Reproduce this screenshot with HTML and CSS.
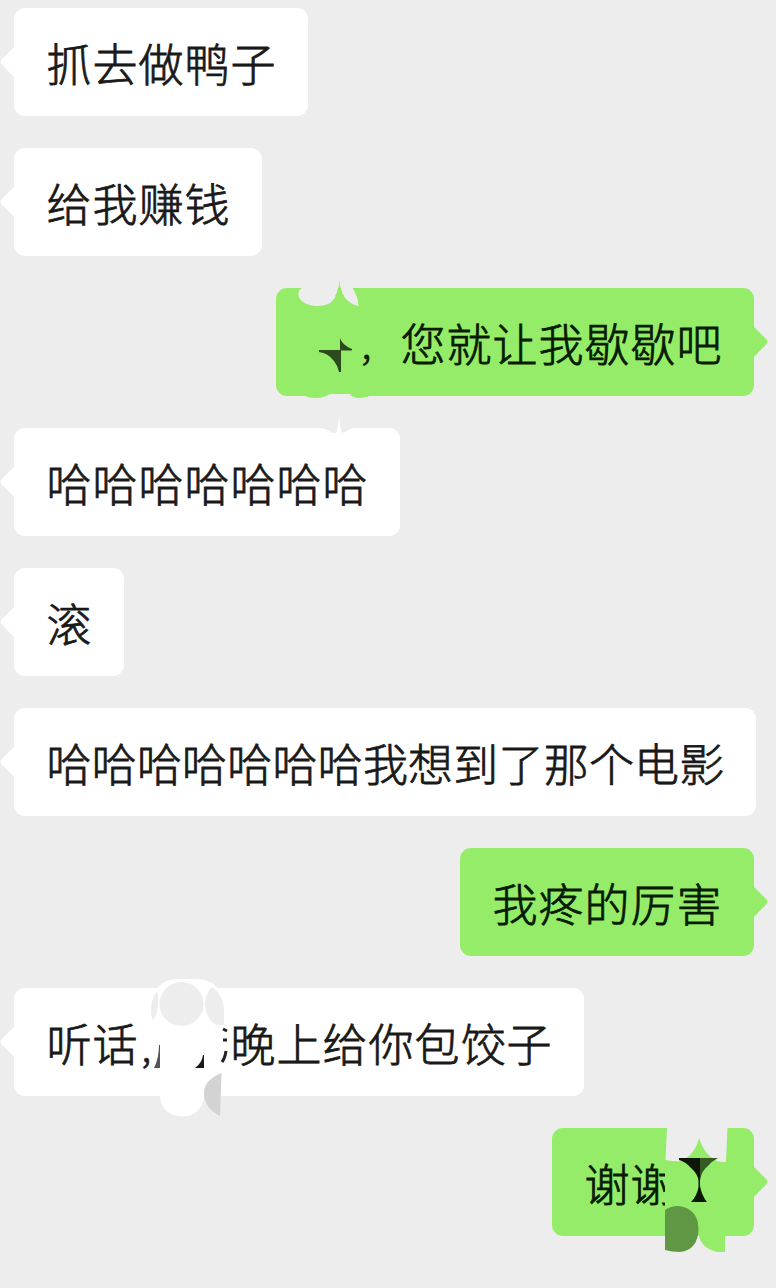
FILE: index.html
```html
<!DOCTYPE html>
<html lang="zh-CN">
<head>
<meta charset="utf-8">
<title>聊天</title>
<link rel="stylesheet" href="styles.css">
</head>
<body>
<main class="chat">
  <div class="row"><svg class="tail" viewBox="0 0 14 32"><path d="M14 1L1.5 13.5Q-.5 16 1.5 18L14 31Z"/></svg><p class="bubble">抓去做鸭子</p></div>
  <div class="row"><svg class="tail" viewBox="0 0 14 32"><path d="M14 1L1.5 13.5Q-.5 16 1.5 18L14 31Z"/></svg><p class="bubble">给我赚钱</p></div>
  <div class="row mine"><p class="bubble covered-start"><span class="comma">，</span>您就让我歇歇吧</p><svg class="tail" viewBox="0 0 14 32"><path d="M0 1L12.5 13.5Q14.5 16 12.5 18L0 31Z"/></svg></div>
  <div class="row"><svg class="tail" viewBox="0 0 14 32"><path d="M14 1L1.5 13.5Q-.5 16 1.5 18L14 31Z"/></svg><p class="bubble">哈哈哈哈哈哈哈</p></div>
  <div class="row"><svg class="tail" viewBox="0 0 14 32"><path d="M14 1L1.5 13.5Q-.5 16 1.5 18L14 31Z"/></svg><p class="bubble">滚</p></div>
  <div class="row"><svg class="tail" viewBox="0 0 14 32"><path d="M14 1L1.5 13.5Q-.5 16 1.5 18L14 31Z"/></svg><p class="bubble tight">哈哈哈哈哈哈哈我想到了那个电影</p></div>
  <div class="row mine"><p class="bubble">我疼的厉害</p><svg class="tail" viewBox="0 0 14 32"><path d="M0 1L12.5 13.5Q14.5 16 12.5 18L0 31Z"/></svg></div>
  <div class="row"><svg class="tail" viewBox="0 0 14 32"><path d="M14 1L1.5 13.5Q-.5 16 1.5 18L14 31Z"/></svg><p class="bubble"><span class="lead">听话<span class="comma-narrow">,</span></span>晚上给你包饺子</p></div>
  <div class="row mine"><p class="bubble covered-end">谢谢</p><svg class="tail" viewBox="0 0 14 32"><path d="M0 1L12.5 13.5Q14.5 16 12.5 18L0 31Z"/></svg></div>
  <svg class="smudges" viewBox="0 0 776 1288">
    <g>
      <path class="bg" d="M303 287C298 290 297 295 300 299C306 307 322 308 330 303C335 299 338 294 338 287Z"/>
      <path class="bg" d="M341 287C341 295 348 304 358.500 306C358 298 355 292 352 287Z"/>
      <path class="green" d="M335 296Q339 290 339.300 280Q340 290 344 296L339 300Z"/>
      <path class="dark" d="M319 350H340V338Q342 345 352 349V350.500H341V372H339Q338 366 334 361Q328 353 319 352Z"/>
      <path class="bg" d="M325 397Q327 394 332 394H348Q352 394 354 397Z"/>
      <path class="green" d="M304 395H328Q324 398 315 398Q308 398 304 395ZM350 395H372Q366 398 360 398Q354 398 350 395Z"/>
      <path class="bg" d="M319 427.500H356Q350 428 347 431Q344 433 340 433H335Q330 433 327 430Q324 428 319 427.500Z"/>
      <path class="white" d="M335 434Q338 431 338.500 419H339.500Q340 431 343 434Z"/>
    </g>
    <g>
      <path class="white" d="M151 1010C151 992 160 979 178 979H196C214 979 224 991 224 1010V1026H151Z"/>
      <circle class="bg" cx="181.500" cy="1004" r="22"/>
      <path class="bg" d="M157 992Q151 998 151 1010Q151 1017 153 1020Q158 1014 158 1003Q159 996 157 992ZM212 987Q224 996 224 1010V1025H216Q206 1019 205 1004Q205 994 212 987Z"/>
      <path class="white" d="M160 1090H204V1097C203 1109 194 1116.500 182 1116.500C169 1116.500 161 1108 160 1097Z"/>
      <path class="fade" d="M160 1045V1068H154Q159 1058 159 1045Z"/>
      <path class="ink" d="M204 1055V1068H195Q202 1063 203 1055Z"/>
      <path class="silver" d="M221.500 1073L220 1116Q204 1108 204 1093Q204 1080 221.500 1073Z"/>
      <path class="mark" d="M223 1029L227 1031M223 1040H227M226 1051Q225 1058 222 1062"/>
    </g>
    <g>
      <path class="green" d="M665 1160H726V1208H665Z"/>
      <path class="bg" d="M667 1127H727.500L726 1162Q719 1162 715 1160Q704 1154 699 1138Q695 1155 681 1161Q675 1162 665.500 1160Z"/>
      <path class="night" d="M679 1158H700V1186Q702 1196 707 1202H691Q697 1196 698.500 1187V1181Q698 1174 691 1168Q686 1162 679 1160Z"/>
      <path class="dusk" d="M700 1158H718Q712 1161 708 1166Q702 1170 700 1180Z"/>
      <path class="moss" d="M665 1210Q671 1206 678 1206Q698 1208 698.500 1229Q698 1250 680 1252Q672 1252 665 1250Z"/>
      <path class="green" d="M699 1235H725V1252H717Q701 1248 699 1235Z"/>
    </g>
  </svg>
</main>
</body>
</html>
```
FILE: styles.css
```css
body {
  margin: 0;
  background: #ededed;
}

.chat {
  position: relative;
  box-sizing: border-box;
  width: 776px;
  height: 1288px;
  padding: 8px 8px 0 0;
  display: flex;
  flex-direction: column;
  gap: 32px;
  overflow: hidden;
}

.row {
  display: flex;
  align-items: center;
  height: 108px;
  color: #fff;
}

.mine {
  justify-content: flex-end;
  color: #95ec69;
}

.tail {
  flex: none;
  width: 14px;
  height: 32px;
  fill: currentColor;
}

.bubble {
  box-sizing: border-box;
  height: 108px;
  margin: 0;
  padding: 0 31.5px 0 32.5px;
  border-radius: 11px;
  background: #fff;
  color: #191919;
  font: 300 45px/109px "Noto Sans CJK SC", sans-serif;
  letter-spacing: 1px;
  -webkit-text-stroke: 0.8px currentColor;
  white-space: nowrap;
}

.mine .bubble {
  background: #95ec69;
  color: #061b00;
}

.bubble.tight {
  letter-spacing: 0.2px;
}

.mine .covered-start {
  padding-left: 78.5px;
}

.mine .covered-end {
  padding-right: 77.5px;
}

.lead {
  display: inline-block;
  width: 184px;
}

.comma {
  display: inline-block;
  box-sizing: border-box;
  width: 46px;
  padding-left: 5px;
  font-size: 32px;
  line-height: 1;
}

.comma-narrow {
  padding-left: 3px;
  font-size: 38px;
}

.smudges {
  position: absolute;
  top: 0;
  left: 0;
  width: 776px;
  height: 1288px;
}

.bg { fill: #ededed; }
.white { fill: #fff; }
.green { fill: #95ec69; }
.dark { fill: #2b4b1c; }
.ink { fill: #191919; }
.fade { fill: #555; }
.silver { fill: #d3d3d3; }
.night { fill: #0b1806; }
.dusk { fill: #355a24; }
.moss { fill: #5f9745; }

.mark {
  fill: none;
  stroke: #222;
  stroke-width: 3;
}
```
